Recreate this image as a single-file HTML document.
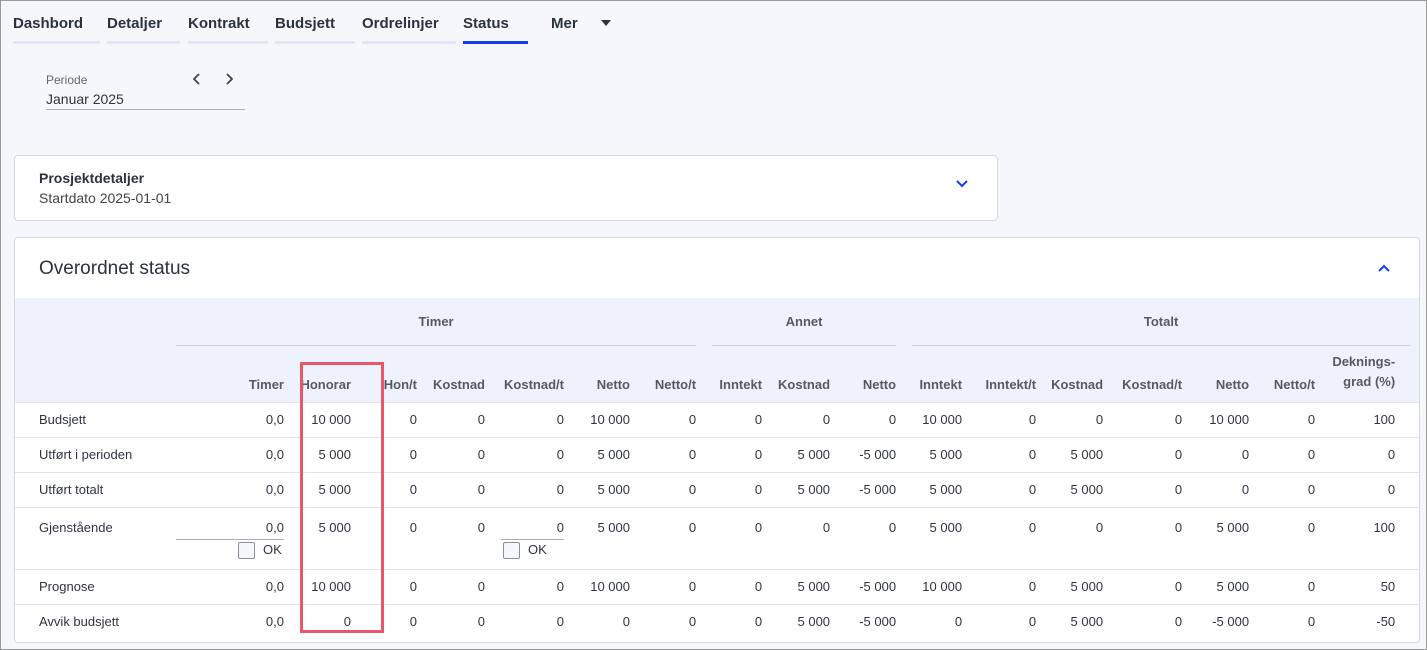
<!DOCTYPE html>
<html><head><meta charset="utf-8"><style>
*{box-sizing:border-box;margin:0;padding:0}
html,body{width:1427px;height:650px;overflow:hidden}
body{background:#f5f7fb;font-family:"Liberation Sans",Arial,sans-serif;color:#2f3440;position:relative;border:1px solid #9a9a9a}
.a{position:absolute}
.tab{position:absolute;top:14px;font-size:15px;font-weight:bold;color:#2b3340;height:29px;border-bottom:3px solid #dfe6f6}
.tab.on{border-bottom-color:#1140e6}
.card{position:absolute;background:#fff;border:1px solid #d6d9e0;border-radius:4px}
table{border-collapse:collapse;table-layout:fixed;position:absolute;left:0;top:60px;width:1404px;font-size:13px}
th{color:#555a63;font-weight:bold;text-align:right;vertical-align:bottom;padding-bottom:10px;font-size:13px}
td{text-align:right;height:35px;border-top:1px solid #e2e4e8;background:#fff;vertical-align:middle}
td.l{text-align:left;padding-left:24px}
thead tr{background:#eef2fd}
.g{text-align:center;vertical-align:middle;padding:0;height:48px}
.g span{display:block;border-bottom:1px solid #cfd3dc;line-height:47px}
.cb{display:inline-block;width:17px;height:17px;border:1px solid #8a8f99;border-radius:2px;background:#f5f7fb;vertical-align:middle;margin-right:8px}
</style></head><body>
<div class="tab" style="left:12px;width:87px">Dashbord</div>
<div class="tab" style="left:106px;width:73px">Detaljer</div>
<div class="tab" style="left:187px;width:80px">Kontrakt</div>
<div class="tab" style="left:274px;width:80px">Budsjett</div>
<div class="tab" style="left:361px;width:94px">Ordrelinjer</div>
<div class="tab on" style="left:462px;width:65px">Status</div>
<div class="a" style="left:550px;top:14px;font-size:15px;font-weight:bold;color:#2b3340">Mer</div>
<div class="a" style="left:600px;top:19px;width:0;height:0;border-left:5px solid transparent;border-right:5px solid transparent;border-top:6px solid #2b3340"></div>
<div class="a" style="left:45px;top:72px;font-size:12px;color:#666">Periode</div>
<div class="a" style="left:45px;top:90px;font-size:14px;color:#2f3440;width:199px;height:19px;border-bottom:1px solid #a9adb5">Januar 2025</div>
<svg class="a" style="left:189px;top:71px" width="50" height="14"><path d="M9 2L4 7l5 5M37 2l5 5-5 5" fill="none" stroke="#444" stroke-width="1.8"/></svg>

<div class="card" style="left:13px;top:154px;width:984px;height:66px">
<div class="a" style="left:24px;top:14px;font-size:14px;font-weight:bold;color:#2b3340">Prosjektdetaljer</div>
<div class="a" style="left:24px;top:34px;font-size:14px;color:#444">Startdato 2025-01-01</div>
<svg class="a" style="left:940px;top:23px" width="14" height="10"><path d="M2 2l5 5 5-5" fill="none" stroke="#1140e6" stroke-width="2"/></svg>
</div>

<div class="card" style="left:13px;top:236px;width:1406px;height:406px;overflow:hidden">
<div class="a" style="left:24px;top:20px;font-size:19px;color:#2b3340">Overordnet status</div>
<svg class="a" style="left:1362px;top:25px" width="14" height="10"><path d="M2 8l5-5 5 5" fill="none" stroke="#1140e6" stroke-width="2"/></svg>
<div class="a" style="left:0;top:60px;width:1406px;border-top:1px solid #d6d9e0"></div>
<table>
<colgroup><col style="width:169px"><col style="width:100px"><col style="width:67px"><col style="width:66px"><col style="width:68px"><col style="width:79px"><col style="width:66px"><col style="width:66px"><col style="width:66px"><col style="width:68px"><col style="width:66px"><col style="width:66px"><col style="width:74px"><col style="width:67px"><col style="width:79px"><col style="width:67px"><col style="width:66px"><col style="width:80px"><col style="width:24px"></colgroup>
<thead>
<tr><th class="g"></th><th class="g" colspan="7"><span style="margin-left:-8px">Timer</span></th><th class="g" colspan="3"><span style="margin-left:16px">Annet</span></th><th class="g" colspan="7"><span style="margin-left:16px;margin-right:-15px">Totalt</span></th><th class="g"></th></tr>
<tr style="height:56px"><th></th><th>Timer</th><th>Honorar</th><th>Hon/t</th><th>Kostnad</th><th>Kostnad/t</th><th>Netto</th><th>Netto/t</th><th>Inntekt</th><th>Kostnad</th><th>Netto</th><th>Inntekt</th><th>Inntekt/t</th><th>Kostnad</th><th>Kostnad/t</th><th>Netto</th><th>Netto/t</th><th style="line-height:20px">Deknings-<br>grad (%)</th><th></th></tr>
</thead>
<tbody>
<tr><td class="l">Budsjett</td><td>0,0</td><td>10 000</td><td>0</td><td>0</td><td>0</td><td>10 000</td><td>0</td><td>0</td><td>0</td><td>0</td><td>10 000</td><td>0</td><td>0</td><td>0</td><td>10 000</td><td>0</td><td>100</td><td></td></tr>
<tr><td class="l">Utført i perioden</td><td>0,0</td><td>5 000</td><td>0</td><td>0</td><td>0</td><td>5 000</td><td>0</td><td>0</td><td>5 000</td><td>-5 000</td><td>5 000</td><td>0</td><td>5 000</td><td>0</td><td>0</td><td>0</td><td>0</td><td></td></tr>
<tr><td class="l">Utført totalt</td><td>0,0</td><td>5 000</td><td>0</td><td>0</td><td>0</td><td>5 000</td><td>0</td><td>0</td><td>5 000</td><td>-5 000</td><td>5 000</td><td>0</td><td>5 000</td><td>0</td><td>0</td><td>0</td><td>0</td><td></td></tr>
<tr style="height:62px"><td class="l" style="vertical-align:top;padding-top:12px">Gjenstående</td>
<td style="vertical-align:top;padding-top:12px"><div style="margin-left:-8px;border-bottom:1px solid #a9adb5;padding-bottom:4px">0,0</div><div style="padding-top:2px;text-align:left;padding-left:54px"><span class="cb"></span>OK</div></td>
<td style="vertical-align:top;padding-top:12px">5 000</td><td style="vertical-align:top;padding-top:12px">0</td><td style="vertical-align:top;padding-top:12px">0</td>
<td style="vertical-align:top;padding-top:12px"><div style="margin-left:16px;border-bottom:1px solid #a9adb5;padding-bottom:4px">0</div><div style="padding-top:2px;text-align:left;padding-left:18px"><span class="cb"></span>OK</div></td>
<td style="vertical-align:top;padding-top:12px">5 000</td><td style="vertical-align:top;padding-top:12px">0</td><td style="vertical-align:top;padding-top:12px">0</td><td style="vertical-align:top;padding-top:12px">0</td><td style="vertical-align:top;padding-top:12px">0</td><td style="vertical-align:top;padding-top:12px">5 000</td><td style="vertical-align:top;padding-top:12px">0</td><td style="vertical-align:top;padding-top:12px">0</td><td style="vertical-align:top;padding-top:12px">0</td><td style="vertical-align:top;padding-top:12px">5 000</td><td style="vertical-align:top;padding-top:12px">0</td><td style="vertical-align:top;padding-top:12px">100</td><td></td></tr>
<tr><td class="l">Prognose</td><td>0,0</td><td>10 000</td><td>0</td><td>0</td><td>0</td><td>10 000</td><td>0</td><td>0</td><td>5 000</td><td>-5 000</td><td>10 000</td><td>0</td><td>5 000</td><td>0</td><td>5 000</td><td>0</td><td>50</td><td></td></tr>
<tr><td class="l">Avvik budsjett</td><td>0,0</td><td>0</td><td>0</td><td>0</td><td>0</td><td>0</td><td>0</td><td>0</td><td>5 000</td><td>-5 000</td><td>0</td><td>0</td><td>5 000</td><td>0</td><td>-5 000</td><td>0</td><td>-50</td><td></td></tr>
</tbody></table>
</div>
<div class="a" style="left:299px;top:361px;width:84px;height:271px;border:3px solid #e8566a"></div>
</body></html>
